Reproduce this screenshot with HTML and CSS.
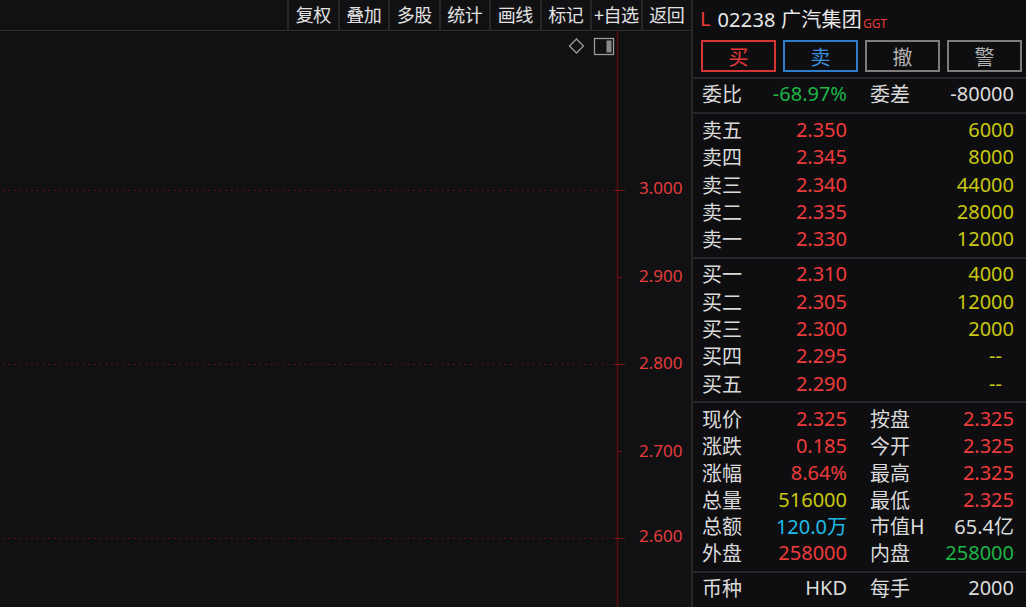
FILE: index.html
```html
<!DOCTYPE html>
<html lang="zh-CN">
<head>
<meta charset="utf-8">
<title>02238 广汽集团</title>
<link rel="stylesheet" href="styles.css">
</head>
<body>
<div class="app">
  <section class="chart-side">
    <nav class="toolbar">
      <div class="tb-spacer"></div>
      <div class="tb-btn">复权</div>
      <div class="tb-btn">叠加</div>
      <div class="tb-btn">多股</div>
      <div class="tb-btn">统计</div>
      <div class="tb-btn">画线</div>
      <div class="tb-btn">标记</div>
      <div class="tb-btn">+自选</div>
      <div class="tb-btn">返回</div>
    </nav>
    <div class="chart">
      <svg class="chart-svg" width="691" height="576" viewBox="0 0 691 576">
        <g class="grid-dots">
          <line x1="3" y1="159.5" x2="616" y2="159.5"/>
          <line x1="3" y1="333.5" x2="616" y2="333.5"/>
          <line x1="3" y1="507.5" x2="616" y2="507.5"/>
        </g>
        <line class="axis" x1="617.5" y1="0" x2="617.5" y2="576"/>
        <g class="ticks">
          <line x1="615" y1="159.5" x2="625" y2="159.5"/>
          <line x1="618" y1="246.5" x2="622" y2="246.5"/>
          <line x1="615" y1="333.5" x2="625" y2="333.5"/>
          <line x1="618" y1="420.5" x2="622" y2="420.5"/>
          <line x1="615" y1="507.5" x2="625" y2="507.5"/>
        </g>
        <g class="axis-labels">
          <text x="639" y="156">3.000</text>
          <text x="639" y="244.5">2.900</text>
          <text x="639" y="331">2.800</text>
          <text x="639" y="419.5">2.700</text>
          <text x="639" y="504.5">2.600</text>
        </g>
        <polygon class="ico" points="576.5,8 583.5,15 576.5,22 569.5,15"/>
        <rect class="ico" x="594.5" y="7.5" width="19" height="16"/>
        <rect class="ico-fill" x="606.5" y="9.5" width="5" height="12"/>
      </svg>
    </div>
  </section>

  <aside class="panel">
    <header class="title">
      <span class="mkt">L</span>
      <span class="name">02238 广汽集团</span>
      <span class="tag">GGT</span>
    </header>
    <div class="actions">
      <div class="act act-buy">买</div>
      <div class="act act-sell">卖</div>
      <div class="act act-grey">撤</div>
      <div class="act act-grey">警</div>
    </div>

    <div class="sec sec-ratio">
      <div class="row"><span class="lb">委比</span><span class="g">-68.97%</span><span class="lb">委差</span><span class="w">-80000</span></div>
    </div>

    <div class="sec sec-book sec-sell">
      <div class="row"><span class="lb">卖五</span><span class="r">2.350</span><span></span><span class="y">6000</span></div>
      <div class="row"><span class="lb">卖四</span><span class="r">2.345</span><span></span><span class="y">8000</span></div>
      <div class="row"><span class="lb">卖三</span><span class="r">2.340</span><span></span><span class="y">44000</span></div>
      <div class="row"><span class="lb">卖二</span><span class="r">2.335</span><span></span><span class="y">28000</span></div>
      <div class="row"><span class="lb">卖一</span><span class="r">2.330</span><span></span><span class="y">12000</span></div>
    </div>

    <div class="sec sec-book sec-buy">
      <div class="row"><span class="lb">买一</span><span class="r">2.310</span><span></span><span class="y">4000</span></div>
      <div class="row"><span class="lb">买二</span><span class="r">2.305</span><span></span><span class="y">12000</span></div>
      <div class="row"><span class="lb">买三</span><span class="r">2.300</span><span></span><span class="y">2000</span></div>
      <div class="row"><span class="lb">买四</span><span class="r">2.295</span><span></span><span class="y dash">--</span></div>
      <div class="row"><span class="lb">买五</span><span class="r">2.290</span><span></span><span class="y dash">--</span></div>
    </div>

    <div class="sec sec-stats">
      <div class="row"><span class="lb">现价</span><span class="r">2.325</span><span class="lb">按盘</span><span class="r">2.325</span></div>
      <div class="row"><span class="lb">涨跌</span><span class="r">0.185</span><span class="lb">今开</span><span class="r">2.325</span></div>
      <div class="row"><span class="lb">涨幅</span><span class="r">8.64%</span><span class="lb">最高</span><span class="r">2.325</span></div>
      <div class="row"><span class="lb">总量</span><span class="y">516000</span><span class="lb">最低</span><span class="r">2.325</span></div>
      <div class="row"><span class="lb">总额</span><span class="c">120.0万</span><span class="lb">市值H</span><span class="w">65.4亿</span></div>
      <div class="row"><span class="lb">外盘</span><span class="r">258000</span><span class="lb">内盘</span><span class="g">258000</span></div>
    </div>

    <div class="sec sec-cur">
      <div class="row"><span class="lb">币种</span><span class="w">HKD</span><span class="lb">每手</span><span class="w">2000</span></div>
    </div>
  </aside>
</div>
</body>
</html>
```

FILE: styles.css
```css
html, body {
  margin: 0;
  padding: 0;
  background: #0f0f12;
}

.app {
  display: flex;
  width: 1026px;
  height: 607px;
  overflow: hidden;
  font-family: "Noto Sans", "Noto Sans CJK SC", sans-serif;
  color: #d9d9d9;
}

/* ---------- left: chart ---------- */
.chart-side {
  flex: 0 0 691px;
  display: flex;
  flex-direction: column;
  background: #111114;
}

.toolbar {
  display: flex;
  height: 30px;
  border-bottom: 1px solid #2e2e31;
}

.tb-spacer {
  flex: 1;
}

.tb-btn {
  flex: 0 0 50.5px;
  box-sizing: border-box;
  border-left: 2px solid #28282b;
  display: flex;
  align-items: center;
  justify-content: center;
  padding-bottom: 1px;
  font-family: "Noto Sans CJK SC", sans-serif;
  font-size: 18px;
  line-height: 29px;
  color: #e2e2e2;
  white-space: nowrap;
  letter-spacing: -0.5px;
}

.chart {
  flex: 1;
}

.chart-svg {
  display: block;
}

.grid-dots line {
  stroke: #7c1212;
  stroke-width: 1;
  stroke-dasharray: 1.4 4.3;
}

.axis {
  stroke: #5e0d0d;
  stroke-width: 1.5;
}

.ticks line {
  stroke: #7c1212;
  stroke-width: 1;
}

.axis-labels text {
  font-family: "Noto Sans", sans-serif;
  font-size: 17px;
  fill: #e43c3c;
  dominant-baseline: central;
}

.ico {
  fill: none;
  stroke: #9a9a9a;
  stroke-width: 1.3;
}

.ico-fill {
  fill: #8a8a8a;
}

/* ---------- right: quote panel ---------- */
.panel {
  flex: 0 0 335px;
  box-sizing: border-box;
  border-left: 2px solid #27272a;
  background: #0e0e11;
  font-size: 20px;
}

.title {
  height: 40px;
  box-sizing: border-box;
  padding: 0 0 4px 7px;
  display: flex;
  align-items: center;
  white-space: nowrap;
}

.mkt {
  color: #ea3a3a;
  margin-right: 7px;
}

.name {
  color: #e8e8e8;
  letter-spacing: 0.2px;
}

.tag {
  color: #ea3a3a;
  font-size: 12px;
  align-self: flex-end;
  margin: 0 0 4px 1px;
}

.actions {
  display: flex;
  gap: 7px;
  padding-left: 8px;
  height: 32px;
  margin-bottom: 5px;
}

.act {
  flex: 0 0 75px;
  box-sizing: border-box;
  border: 2px solid #7d7d7d;
  display: flex;
  align-items: center;
  justify-content: center;
  font-family: "Noto Sans CJK SC", sans-serif;
  font-size: 20px;
  color: #b3b3b3;
}

.act-buy {
  border-color: #d63636;
  color: #e63a3a;
}

.act-sell {
  border-color: #2d7ec9;
  color: #3b8edc;
}

.sec {
  border-top: 2px solid #26262a;
  padding: 0 12px 0 9px;
}

.row {
  display: grid;
  grid-template-columns: 60px 85px 89px 78px;
  align-items: center;
  box-sizing: border-box;
  padding-bottom: 4px;
  white-space: nowrap;
}

.row > :nth-child(2),
.row > :nth-child(4) {
  text-align: right;
}

.row > :nth-child(3) {
  padding-left: 23px;
}

.lb {
  font-family: "Noto Sans CJK SC", sans-serif;
  color: #dadada;
}

.sec-ratio .row {
  height: 33px;
}

.sec-sell {
  padding-top: 1px;
  padding-bottom: 6px;
}

.sec-buy {
  padding-top: 0;
  padding-bottom: 5px;
}

.sec-book .row {
  height: 27.3px;
}

.sec-stats {
  padding-top: 1px;
  padding-bottom: 6px;
}

.sec-stats .row {
  height: 26.85px;
}

.sec-cur {
  padding-top: 0;
}

.sec-cur .row {
  height: 27px;
}

.r { color: #ee3b3b; }
.g { color: #1db445; }
.y { color: #c8c810; }
.c { color: #1bbde6; }
.w { color: #dcdcdc; }

.dash {
  padding-right: 12px;
}
```
